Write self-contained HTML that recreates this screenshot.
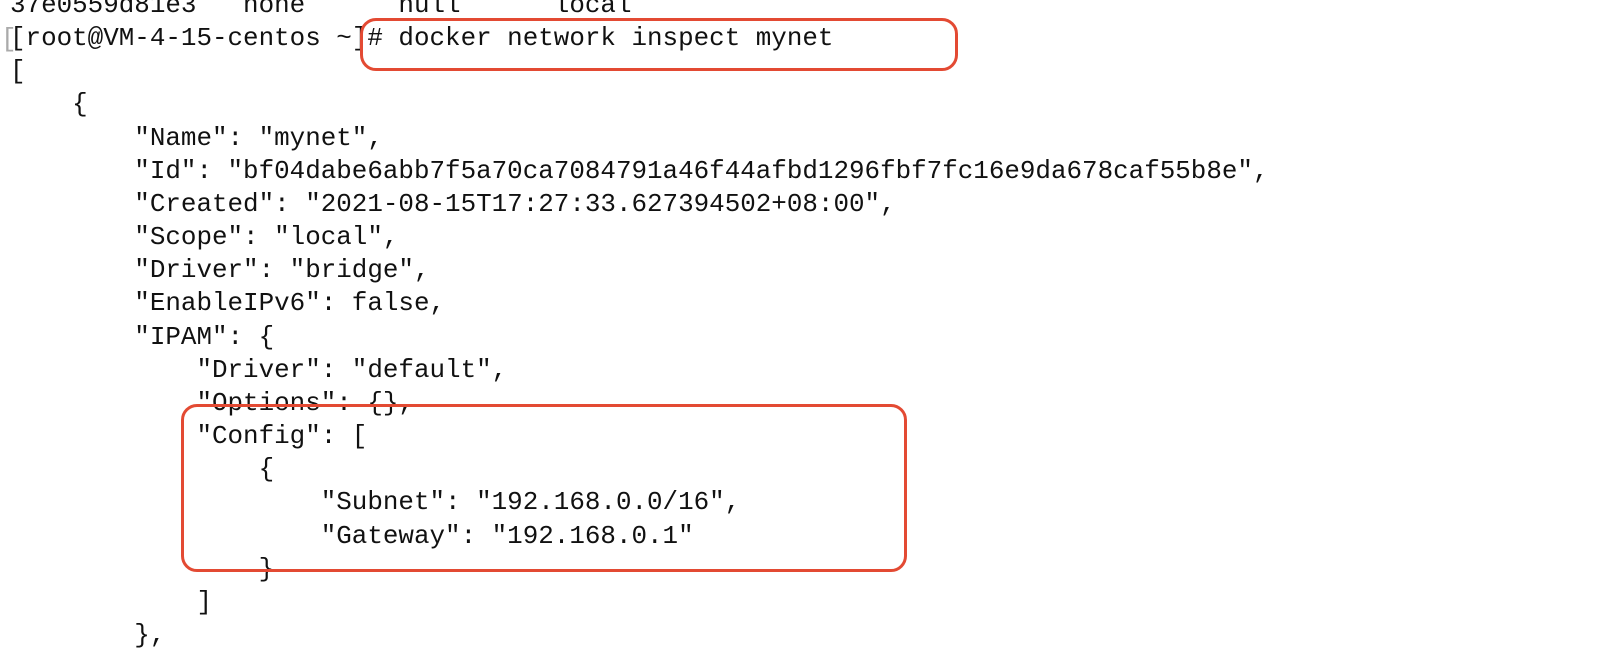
<!DOCTYPE html>
<html><head><meta charset="utf-8"><style>
html,body{margin:0;padding:0;background:#fff;width:1606px;height:660px;overflow:hidden;position:relative}
pre{position:absolute;left:10px;top:-11px;margin:0;font-family:"Liberation Mono",monospace;font-size:25.9px;line-height:33.15px;color:#111}
.box{position:absolute;border:3px solid #e34a33;border-radius:16px;box-sizing:border-box}
.g{position:absolute;left:1px;top:24px;font-family:"Liberation Mono",monospace;font-size:26px;color:#aaa}
</style></head><body>
<div class="g">[</div>
<pre>37e0559d81e3   none      null      local
[root@VM-4-15-centos ~]# docker network inspect mynet
[
    {
        "Name": "mynet",
        "Id": "bf04dabe6abb7f5a70ca7084791a46f44afbd1296fbf7fc16e9da678caf55b8e",
        "Created": "2021-08-15T17:27:33.627394502+08:00",
        "Scope": "local",
        "Driver": "bridge",
        "EnableIPv6": false,
        "IPAM": {
            "Driver": "default",
            "Options": {},
            "Config": [
                {
                    "Subnet": "192.168.0.0/16",
                    "Gateway": "192.168.0.1"
                }
            ]
        },</pre>
<div class="box" style="left:360px;top:18px;width:598px;height:53px"></div>
<div class="box" style="left:181px;top:404px;width:726px;height:168px"></div>
</body></html>
